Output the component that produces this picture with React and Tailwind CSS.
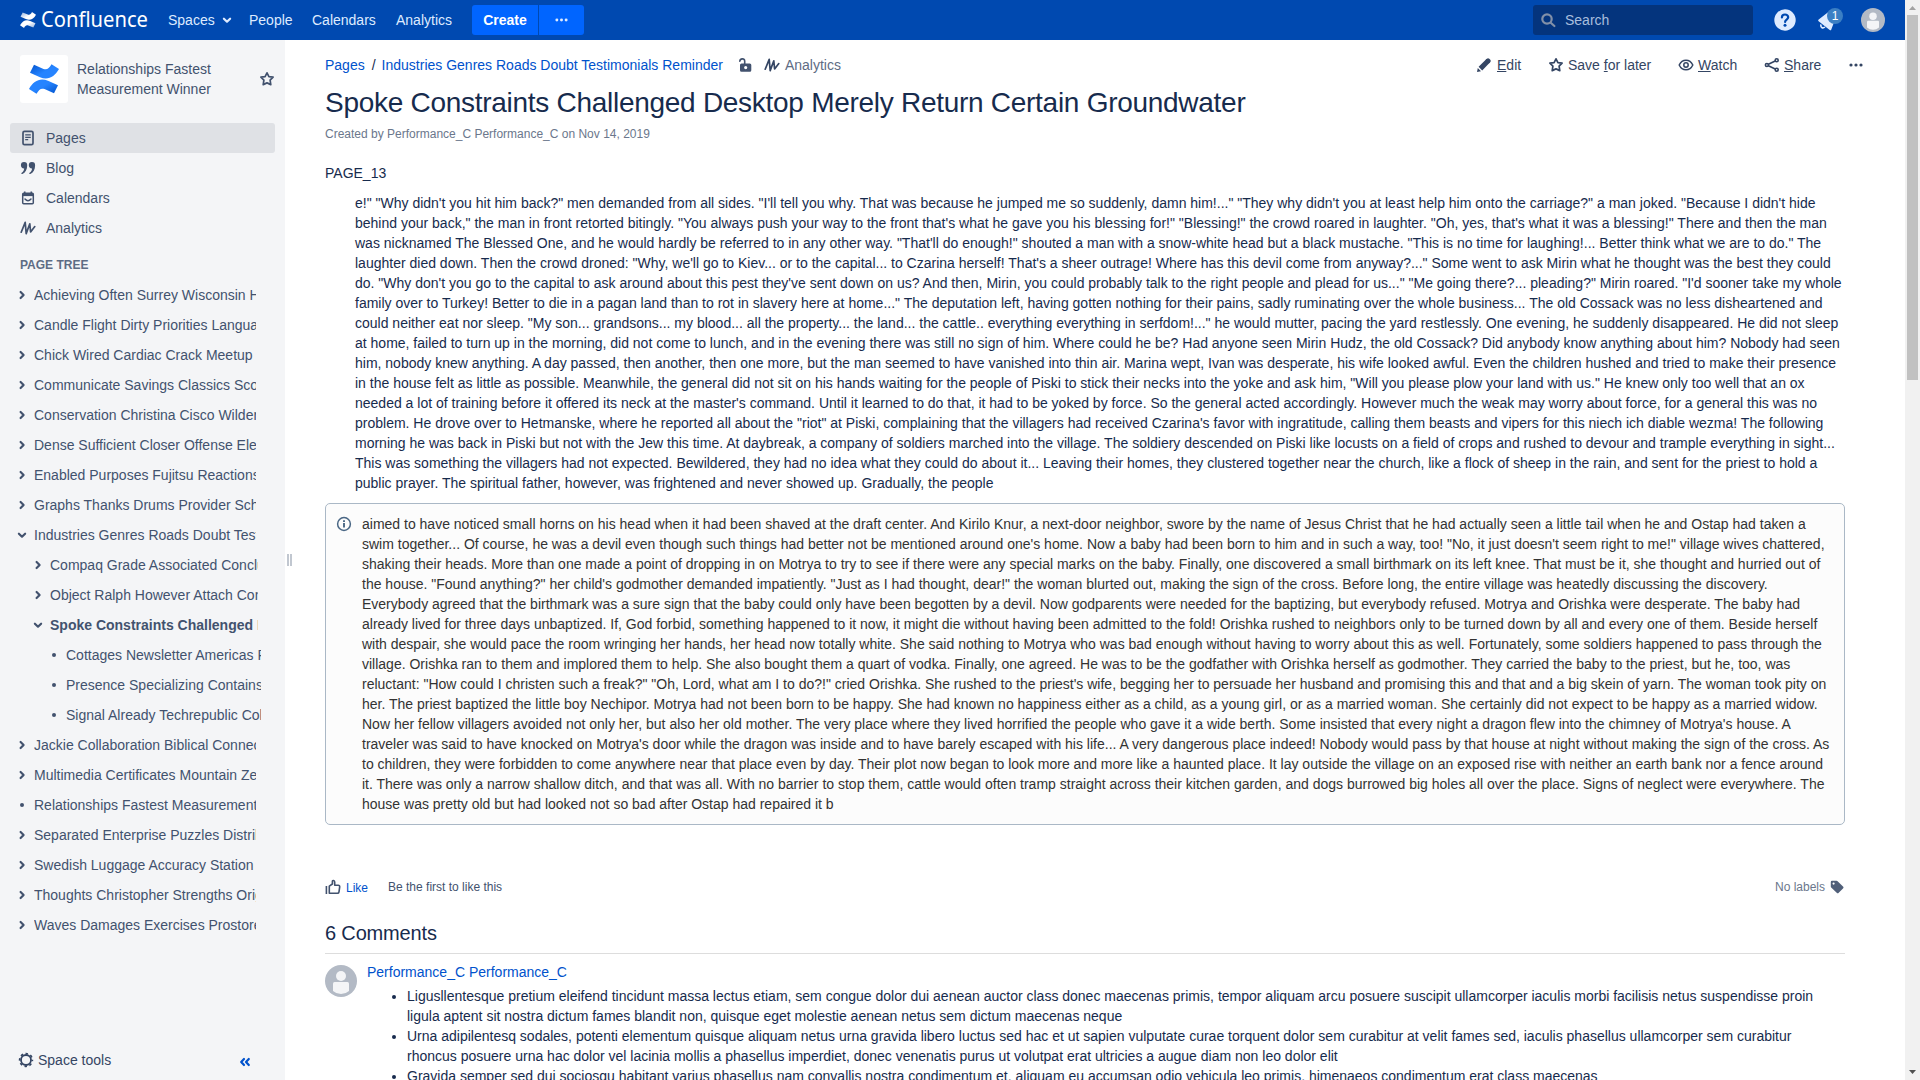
const Chevron = ({ down, className = "" }) => (
  <svg viewBox="0 0 10 10" className={`w-[10px] h-[10px] shrink-0 ${className}`} fill="none" stroke="currentColor" strokeWidth="2.2" strokeLinecap="round" strokeLinejoin="round">
    <path d={down ? "M1.9 3.7 5 6.700 8.100 3.700" : "M3.600 2 6.600 5 3.600 8"} />
  </svg>
);

const Star = ({ className = "" }) => (
  <svg viewBox="0 0 16 16" className={`w-4 h-4 shrink-0 ${className}`} fill="none" stroke="currentColor" strokeWidth="1.7" strokeLinejoin="round">
    <path d="M8 1.8l1.9 3.8 4.2.6-3 3 .7 4.4L8 11.9l-3.8 1.7.7-4.4-3-3 4.2-.6z" />
  </svg>
);

const Wave = ({ className = "" }) => (
  <svg viewBox="0 0 16 16" className={`w-4 h-4 shrink-0 ${className}`} fill="none" stroke="currentColor" strokeWidth="1.7" strokeLinecap="round" strokeLinejoin="round">
    <path d="M1.2 12.200 5.200 2.400 6.200 13.600 9.800 3.800 10.600 12 14.800 6.600" />
  </svg>
);

const Dots = ({ className = "" }) => (
  <svg viewBox="0 0 14 4" className={`w-[14px] h-1 shrink-0 ${className}`} fill="currentColor">
    <circle cx="2" cy="2" r="1.6" />
    <circle cx="7" cy="2" r="1.6" />
    <circle cx="12" cy="2" r="1.6" />
  </svg>
);

const Avatar = ({ className = "" }) => (
  <svg viewBox="0 0 32 32" className={`shrink-0 ${className}`}>
    <circle cx="16" cy="16" r="16" fill="#b3bac5" />
    <circle cx="16" cy="11" r="5" fill="#f4f5f7" />
    <path d="M8 18.5a1.5 1.5 0 0 1 1.5-1.5h13a1.5 1.5 0 0 1 1.5 1.5V26q-3.300 3-8 3t-8-3z" fill="#f4f5f7" />
  </svg>
);

const Logo = ({ id, edge, edgeOpacity = 1, fill, className = "" }) => (
  <svg viewBox="0 0 30 30" className={`shrink-0 ${className}`}>
    <defs>
      <linearGradient id={`${id}a`} x1="0" y1="0" x2="0.700" y2="0.600">
        <stop offset="0" stopColor={edge} stopOpacity={edgeOpacity} />
        <stop offset="0.800" stopColor={fill} />
      </linearGradient>
      <linearGradient id={`${id}b`} x1="1" y1="1" x2="0.300" y2="0.400">
        <stop offset="0" stopColor={edge} stopOpacity={edgeOpacity} />
        <stop offset="0.800" stopColor={fill} />
      </linearGradient>
    </defs>
    <path d="M5 .8 1 8.800 11 13.200C19 16.500 25.500 13 30 5L22.500.2C20 4.500 18 6.200 14.500 4.900z" fill={`url(#${id}a)`} />
    <path d="M25 29.200 29 21.200 19 16.800C11 13.500 4.500 17 0 25l7.500 4.800C10 25.500 12 23.800 15.500 25.100z" fill={`url(#${id}b)`} />
  </svg>
);

const PageIcon = () => (
  <svg viewBox="0 0 16 16" className="w-4 h-4" fill="none" stroke="currentColor" strokeWidth="1.7">
    <rect x="3" y="1.300" width="10" height="13.400" rx="1.500" />
    <path d="M5.200 4.800h5.600M5.200 7.300h5.600M5.200 9.700h3" strokeWidth="1.300" />
  </svg>
);
const QuoteIcon = () => (
  <svg viewBox="0 0 16 16" className="w-4 h-4" fill="currentColor">
    <path d="M4 2a3.200 3.200 0 0 1 3.200 3.400c0 4-1.700 7.300-4.800 8.600-.9.300-1.500-.7-.7-1.300 1.500-1.100 2.300-2.500 2.500-4.300A3.200 3.200 0 1 1 4 2z" />
    <path d="M11.900 2a3.200 3.200 0 0 1 3.200 3.400c0 4-1.700 7.300-4.800 8.600-.9.300-1.500-.7-.7-1.300 1.500-1.100 2.300-2.500 2.500-4.300A3.200 3.200 0 1 1 11.900 2z" />
  </svg>
);
const CalendarIcon = () => (
  <svg viewBox="0 0 16 16" className="w-4 h-4" fill="none" stroke="currentColor" strokeWidth="1.500">
    <rect x="2.700" y="3.200" width="10.600" height="10.600" rx="1" />
    <path d="M2.700 4.800h10.600" strokeWidth="2.600" />
    <path d="M4.700 1.500v2M11.300 1.500v2" strokeWidth="1.600" />
    <path d="M5 9q3 3.400 6 0" strokeLinecap="round" />
  </svg>
);

const NAV = [
  ["Pages", PageIcon, true],
  ["Blog", QuoteIcon],
  ["Calendars", CalendarIcon],
  ["Analytics", Wave],
];

const TREE = [
  ["Achieving Often Surrey Wisconsin Hills", 0, "right"],
  ["Candle Flight Dirty Priorities Language", 0, "right"],
  ["Chick Wired Cardiac Crack Meetup", 0, "right"],
  ["Communicate Savings Classics Scope", 0, "right"],
  ["Conservation Christina Cisco Wilderness", 0, "right"],
  ["Dense Sufficient Closer Offense Electric", 0, "right"],
  ["Enabled Purposes Fujitsu Reactions", 0, "right"],
  ["Graphs Thanks Drums Provider School", 0, "right"],
  ["Industries Genres Roads Doubt Testimonials Reminder", 0, "down"],
  ["Compaq Grade Associated Conclude", 1, "right"],
  ["Object Ralph However Attach Contact", 1, "right"],
  ["Spoke Constraints Challenged Desktop Merely Return Certain Groundwater", 1, "down", true],
  ["Cottages Newsletter Americas Prior", 2, "dot"],
  ["Presence Specializing Contains", 2, "dot"],
  ["Signal Already Techrepublic Collect", 2, "dot"],
  ["Jackie Collaboration Biblical Connect", 0, "right"],
  ["Multimedia Certificates Mountain Zealand", 0, "right"],
  ["Relationships Fastest Measurement Winner", 0, "dot"],
  ["Separated Enterprise Puzzles Distributed", 0, "right"],
  ["Swedish Luggage Accuracy Station", 0, "right"],
  ["Thoughts Christopher Strengths Origin", 0, "right"],
  ["Waves Damages Exercises Prostores", 0, "right"],
];
const INDENT = ["pl-[17px] w-[256px]", "pl-[33px] w-[258px]", "pl-[49px] w-[261px]"];

const QUOTE = `e!" "Why didn't you hit him back?" men demanded from all sides. "I'll tell you why. That was because he jumped me so suddenly, damn him!..." "They why didn't you at least help him onto the carriage?" a man joked. "Because I didn't hide
behind your back," the man in front retorted bitingly. "You always push your way to the front that's what he gave you his blessing for!" "Blessing!" the crowd roared in laughter. "Oh, yes, that's what it was a blessing!" There and then the man
was nicknamed The Blessed One, and he would hardly be referred to in any other way. "That'll do enough!" shouted a man with a snow-white head but a black mustache. "This is no time for laughing!... Better think what we are to do." The
laughter died down. Then the crowd droned: "Why, we'll go to Kiev... or to the capital... to Czarina herself! That's a sheer outrage! Where has this devil come from anyway?..." Some went to ask Mirin what he thought was the best they could
do. "Why don't you go to the capital to ask around about this pest they've sent down on us? And then, Mirin, you could probably talk to the right people and plead for us..." "Me going there?... pleading?" Mirin roared. "I'd sooner take my whole
family over to Turkey! Better to die in a pagan land than to rot in slavery here at home..." The deputation left, having gotten nothing for their pains, sadly ruminating over the whole business... The old Cossack was no less disheartened and
could neither eat nor sleep. "My son... grandsons... my blood... all the property... the land... the cattle.. everything everything in serfdom!..." he would mutter, pacing the yard restlessly. One evening, he suddenly disappeared. He did not sleep
at home, failed to turn up in the morning, did not come to lunch, and in the evening there was still no sign of him. Where could he be? Had anyone seen Mirin Hudz, the old Cossack? Did anybody know anything about him? Nobody had seen
him, nobody knew anything. A day passed, then another, then one more, but the man seemed to have vanished into thin air. Marina wept, Ivan was desperate, his wife looked awful. Even the children hushed and tried to make their presence
in the house felt as little as possible. Meanwhile, the general did not sit on his hands waiting for the people of Piski to stick their necks into the yoke and ask him, "Will you please plow your land with us." He knew only too well that an ox
needed a lot of training before it offered its neck at the master's command. Until it learned to do that, it had to be yoked by force. So the general acted accordingly. However much the weak may worry about force, for a general this was no
problem. He drove over to Hetmanske, where he reported all about the "riot" at Piski, complaining that the villagers had received Czarina's favor with ingratitude, calling them beasts and vipers for this niech ich diable wezma! The following
morning he was back in Piski but not with the Jew this time. At daybreak, a company of soldiers marched into the village. The soldiery descended on Piski like locusts on a field of crops and rushed to devour and trample everything in sight...
This was something the villagers had not expected. Bewildered, they had no idea what they could do about it... Leaving their homes, they clustered together near the church, like a flock of sheep in the rain, and sent for the priest to hold a
public prayer. The spiritual father, however, was frightened and never showed up. Gradually, the people`;

const INFO = `aimed to have noticed small horns on his head when it had been shaved at the draft center. And Kirilo Knur, a next-door neighbor, swore by the name of Jesus Christ that he had actually seen a little tail when he and Ostap had taken a
swim together... Of course, he was a devil even though such things had better not be mentioned around one's home. Now a baby had been born to him and in such a way, too! "No, it just doesn't seem right to me!" village wives chattered,
shaking their heads. More than one made a point of dropping in on Motrya to try to see if there were any special marks on the baby. Finally, one discovered a small birthmark on its left knee. That must be it, she thought and hurried out of
the house. "Found anything?" her child's godmother demanded impatiently. "Just as I had thought, dear!" the woman blurted out, making the sign of the cross. Before long, the entire village was heatedly discussing the discovery.
Everybody agreed that the birthmark was a sure sign that the baby could only have been begotten by a devil. Now godparents were needed for the baptizing, but everybody refused. Motrya and Orishka were desperate. The baby had
already lived for three days unbaptized. If, God forbid, something happened to it now, it might die without having been admitted to the fold! Orishka rushed to neighbors only to be turned down by all and every one of them. Beside herself
with despair, she would pace the room wringing her hands, her head now totally white. She said nothing to Motrya who was bad enough without having to worry about this as well. Fortunately, some soldiers happened to pass through the
village. Orishka ran to them and implored them to help. She also bought them a quart of vodka. Finally, one agreed. He was to be the godfather with Orishka herself as godmother. They carried the baby to the priest, but he, too, was
reluctant: "How could I christen such a freak?" "Oh, Lord, what am I to do?!" cried Orishka. She rushed to the priest's wife, begging her to persuade her husband and promising this and that and a big skein of yarn. The woman took pity on
her. The priest baptized the little boy Nechipor. Motrya had not been born to be happy. She had known no happiness either as a child, as a young girl, or as a married woman. She certainly did not expect to be happy as a married widow.
Now her fellow villagers avoided not only her, but also her old mother. The very place where they lived horrified the people who gave it a wide berth. Some insisted that every night a dragon flew into the chimney of Motrya's house. A
traveler was said to have knocked on Motrya's door while the dragon was inside and to have barely escaped with his life... A very dangerous place indeed! Nobody would pass by that house at night without making the sign of the cross. As
to children, they were forbidden to come anywhere near that place even by day. Their plot now began to look more and more like a haunted place. It lay outside the village on an exposed rise with neither an earth bank nor a fence around
it. There was only a narrow shallow ditch, and that was all. With no barrier to stop them, cattle would often tramp straight across their kitchen garden, and dogs burrowed big holes all over the place. Signs of neglect were everywhere. The
house was pretty old but had looked not so bad after Ostap had repaired it b`;

const COMMENTS = [
  `Ligusllentesque pretium eleifend tincidunt massa lectus etiam, sem congue dolor dui aenean auctor class donec maecenas primis, tempor aliquam arcu posuere suscipit ullamcorper iaculis morbi facilisis netus suspendisse proin
ligula aptent sit nostra dictum fames blandit non, quisque eget molestie aenean netus sem dictum maecenas neque`,
  `Urna adipilentesq sodales, potenti elementum quisque aliquam netus urna gravida libero luctus sed hac et ut sapien vulputate curae torquent dolor sem curabitur at velit fames sed, iaculis phasellus ullamcorper sem curabitur
rhoncus posuere urna hac dolor vel lacinia mollis a phasellus imperdiet, donec venenatis purus ut volutpat erat ultricies a augue diam non leo dolor elit`,
  `Gravida semper sed dui sociosqu habitant varius phasellus nam convallis nostra condimentum et, aliquam eu accumsan odio vehicula leo primis, himenaeos condimentum erat class maecenas`,
];

function Header() {
  return (
    <header className="flex h-10 shrink-0 items-center bg-[#0049b0] pl-5 pr-5 text-[#deebff]">
      <Logo id="header-logo" edge="#fff" edgeOpacity={0.55} fill="#fff" className="h-4 w-4" />
      <svg className="ml-[6px] h-8 w-[107px] shrink-0 overflow-visible" viewBox="0 0 107 32">
        <text x="-1" y="22.500" textLength="107" lengthAdjust="spacingAndGlyphs" fontSize="21" fill="#fff" fontFamily="'Noto Sans', 'Open Sans', sans-serif">Confluence</text>
      </svg>
      <nav className="ml-[19px] flex items-center">
        <span className="flex w-[81px] items-center">
          Spaces
          <Chevron down className="ml-[7px]" />
        </span>
        <span className="w-[63px]">People</span>
        <span className="w-[84px]">Calendars</span>
        <span className="w-[76px]">Analytics</span>
      </nav>
      <div className="flex h-[30px] gap-px">
        <div className="flex w-[66px] items-center justify-center rounded-l-[3px] bg-[#0065ff] font-bold text-white">Create</div>
        <div className="flex w-[45px] items-center justify-center rounded-r-[3px] bg-[#0065ff]">
          <Dots className="w-[13px]! mr-px" />
        </div>
      </div>
      <div className="ml-auto flex h-[30px] w-[220px] items-center rounded-[3px] bg-[#04347d] pl-2 text-[#a8bedd]">
        <svg viewBox="0 0 15 15" className="mr-[9px] h-[15px] w-[15px]" fill="none" stroke="#8290a8" strokeWidth="2.200" strokeLinecap="round">
          <circle cx="6" cy="6" r="4.700" />
          <path d="m9.700 9.700 3.700 3.300" />
        </svg>
        Search
      </div>
      <svg viewBox="0 0 22 22" className="ml-[21px] h-[22px] w-[22px]">
        <circle cx="11" cy="11" r="10.700" fill="#deebff" />
        <path d="M7.900 8.500C7.900 6.600 9.200 5.500 11 5.500s3.200 1.100 3.200 2.800c0 2.200-3.100 2.300-3.100 4.700" fill="none" stroke="#0049b0" strokeWidth="2.200" strokeLinecap="round" />
        <circle cx="11" cy="16.300" r="1.500" fill="#0049b0" />
      </svg>
      <div className="relative ml-[22px] h-6 w-6">
        <svg viewBox="0 0 24 24" className="h-6 w-6" fill="#deebff">
          <path d="M.6 13.200a1.100 1.100 0 0 1 .1-1.700L11 3.500l5.500 9.500-3.300 8.700a1 1 0 0 1-1.500.3z" />
          <path d="M3.200 16.500a2 2 0 1 0 3.600 2.400" fill="none" stroke="#deebff" strokeWidth="1.600" />
        </svg>
        <span className="absolute left-[9px] top-0 flex h-4 w-4 items-center justify-center rounded-full bg-[#3b7fc4] text-xs text-white">1</span>
      </div>
      <Avatar className="ml-[19px] h-6 w-6" />
    </header>
  );
}

function Sidebar() {
  return (
    <aside className="flex w-[285px] shrink-0 flex-col bg-[#f4f5f7] text-[#42526e]">
      <div className="mt-[15px] flex h-12 items-center pl-5">
        <div className="flex h-12 w-12 items-center justify-center rounded-[3px] bg-white">
          <Logo id="space-logo" edge="#0052cc" fill="#2684ff" className="h-[30px] w-[30px]" />
        </div>
        <div className="ml-[9px] leading-5">
          Relationships Fastest
          <br />
          Measurement Winner
        </div>
        <Star className="ml-auto mr-[10px]" />
      </div>
      <nav className="mx-[10px] mt-5">
        {NAV.map(([label, Icon, active]) => (
          <div key={label} className={`flex h-[30px] items-center rounded-[3px] pl-[10px] ${active ? "bg-[#dfe1e5]" : ""}`}>
            <Icon />
            <span className="ml-[10px]">{label}</span>
          </div>
        ))}
      </nav>
      <h2 className="mt-3 pl-5 text-xs font-bold leading-5 text-[#5e6c84]">PAGE TREE</h2>
      <div className="mt-[5px]">
        {TREE.map(([label, level, mark, bold]) => (
          <div key={label} className={`flex h-[30px] items-center overflow-hidden ${INDENT[level]}`}>
            {mark === "dot" ? (
              <span className="mx-[3px] h-1 w-1 shrink-0 rounded-full bg-[#42526e]" />
            ) : (
              <Chevron down={mark === "down"} />
            )}
            <span className={`ml-[7px] flex-1 overflow-hidden whitespace-nowrap ${bold ? "font-bold" : ""}`}>{label}</span>
          </div>
        ))}
      </div>
      <div className="mt-auto flex h-10 items-center pl-[18px] text-[#344563]">
        <svg viewBox="0 0 16 16" className="h-4 w-4" fill="none" stroke="currentColor">
          <circle cx="8" cy="8" r="5" strokeWidth="1.800" />
          <circle cx="8" cy="8" r="6.400" strokeWidth="1.600" strokeDasharray="2.500 2.526" strokeDashoffset="1.250" />
        </svg>
        <span className="ml-1">Space tools</span>
        <svg viewBox="0 0 12 10" className="ml-[128px] mt-1 h-[10px] w-3" fill="none" stroke="#0052cc" strokeWidth="2.200" strokeLinecap="round" strokeLinejoin="round">
          <path d="M5 2 2.200 5 5 8M9.800 2 7 5 9.800 8" />
        </svg>
      </div>
    </aside>
  );
}

function Toolbar() {
  return (
    <div className="flex items-center text-[#344563]">
      <svg viewBox="0 0 16 16" className="h-4 w-4" fill="currentColor">
        <path d="M1 15l.8-4 3.200 3.200zM2.600 9.800 10.500 2.100a3.100 3.100 0 0 1 3.400 3.400L6.200 13.400z" />
        <path d="M10.800 1.800a1.800 1.800 0 0 1 2.500-.1l1 1a1.800 1.800 0 0 1-.1 2.500l-1.400 1.400-3.400-3.400z" />
      </svg>
      <span className="ml-[5px] w-[51px]"><u>E</u>dit</span>
      <Star />
      <span className="ml-1 w-[110px]">Save <u>f</u>or later</span>
      <svg viewBox="0 0 16 16" className="h-4 w-4" fill="none" stroke="currentColor" strokeWidth="1.500">
        <path d="M1.200 8C2.600 5 5 3.200 8 3.200S13.400 5 14.800 8C13.400 11 11 12.800 8 12.800S2.600 11 1.200 8z" />
        <circle cx="8" cy="8" r="2.200" />
      </svg>
      <span className="ml-[4px] w-[66px]"><u>W</u>atch</span>
      <svg viewBox="0 0 16 16" className="h-4 w-4" fill="none" stroke="currentColor" strokeWidth="1.600">
        <circle cx="2.900" cy="8" r="1.500" />
        <circle cx="12.700" cy="3.300" r="1.500" />
        <circle cx="12.700" cy="12.700" r="1.500" />
        <path d="m4.400 7.300 6.800-3.300M4.400 8.700l6.800 3.300" />
      </svg>
      <span className="ml-1 w-[65px]"><u>S</u>hare</span>
      <Dots />
    </div>
  );
}

function Main() {
  return (
    <main className="flex min-w-0 flex-1 flex-col overflow-hidden pt-[15px] pr-[60px] text-[#172b4d]">
      <div className="-mr-[18px] flex h-5 items-center">
        <span className="text-[#0052cc]">Pages</span>
        <span className="ml-[7px]">/</span>
        <span className="ml-[6px] text-[#0052cc]">Industries Genres Roads Doubt Testimonials Reminder</span>
        <svg viewBox="0 0 16 16" className="ml-[14px] h-4 w-4 text-[#42526e]" fill="currentColor">
          <path fillRule="evenodd" d="M4.500 6.500h8.300a1.500 1.500 0 0 1 1.500 1.500v5.300a1.500 1.500 0 0 1-1.500 1.500H4.500A1.500 1.500 0 0 1 3 13.300V8a1.500 1.500 0 0 1 1.500-1.500zM8.700 9a1.600 1.600 0 1 0 0 3.200 1.600 1.600 0 0 0 0-3.200z" />
          <path d="M2.800 4.300C3 1.300 7.400.9 7.700 4v3" fill="none" stroke="currentColor" strokeWidth="1.600" strokeLinecap="round" />
        </svg>
        <Wave className="ml-[11px] text-[#344563]" />
        <span className="ml-[5px] text-[#5e6c84]">Analytics</span>
        <div className="ml-auto">
          <Toolbar />
        </div>
      </div>
      <h1 className="mt-[12px] whitespace-nowrap text-[28px] leading-8 tracking-[-0.01em]">
        Spoke Constraints Challenged Desktop Merely Return Certain Groundwater
      </h1>
      <div className="mt-[5px] text-xs leading-5 text-[#6b778c]">Created by Performance_C Performance_C on Nov 14, 2019</div>
      <p className="mt-[19px] leading-5">PAGE_13</p>
      <p className="mt-[10px] whitespace-pre pl-[30px] leading-5">{QUOTE}</p>
      <div className="mt-[10px] flex rounded-[5px] border border-[#aab8c6] bg-[#fcfcfc] py-[10px] text-[#333]">
        <svg viewBox="0 0 16 16" className="ml-[10px] mr-[10px] mt-[2px] h-4 w-4 shrink-0" fill="none" stroke="#4a6785">
          <circle cx="8" cy="8" r="6.400" strokeWidth="1.500" />
          <path d="M8 7v4.500M8 4.200v1.700" strokeWidth="1.900" />
        </svg>
        <p className="whitespace-pre leading-5">{INFO}</p>
      </div>
      <div className="mt-[53px] flex h-5 items-center text-xs">
        <svg viewBox="0 0 16 16" className="h-4 w-4" fill="none" stroke="#42526e" strokeWidth="1.600" strokeLinejoin="round">
          <path d="M1.400 7v8" />
          <path d="M4.300 14.300V7.200L7.400 5V2.300C7.400 1.200 9.600 1 9.700 3v3.300h3.600c1 0 1.500.7 1.400 1.500l-.7 5c-.1.900-.8 1.500-1.600 1.500z" />
        </svg>
        <span className="ml-[5px] mt-[2px] text-[#0052cc]">Like</span>
        <span className="ml-5 text-[#42526e]">Be the first to like this</span>
        <span className="ml-auto text-[#6b778c]">No labels</span>
        <svg viewBox="0 0 14 14" className="ml-[5px] mr-[1px] h-[14px] w-[14px]" fill="#505f79">
          <path fillRule="evenodd" d="M2 .8h4.600a1.500 1.500 0 0 1 1 .4l5.400 5.300a1.400 1.400 0 0 1 0 2l-4.300 4.300a1.400 1.400 0 0 1-2 0L1.200 7.500a1.500 1.500 0 0 1-.4-1V2A1.200 1.200 0 0 1 2 .8zm1.600 1.700a1.100 1.100 0 1 0 0 2.200 1.100 1.100 0 0 0 0-2.200z" />
        </svg>
      </div>
      <h2 className="mt-[25px] border-b border-[#dddddd] pb-[8px] text-xl leading-6 tracking-[-0.008em]">6 Comments</h2>
      <div className="mt-[8px] flex">
        <Avatar className="mt-[3px] h-8 w-8" />
        <div className="ml-[10px]">
          <div className="leading-5 text-[#0052cc]">Performance_C Performance_C</div>
          <ul className="mt-[4px] list-disc pl-10 leading-5">
            {COMMENTS.map((c) => (
              <li key={c} className="whitespace-pre">{c}</li>
            ))}
          </ul>
        </div>
      </div>
    </main>
  );
}

export default function App() {
  return (
    <div className="flex h-[1080px] w-[1920px] overflow-hidden bg-white text-sm font-['Liberation_Sans',Arial,sans-serif]">
      <div className="flex min-w-0 flex-1 flex-col">
        <Header />
        <div className="flex min-h-0 flex-1">
          <Sidebar />
          <div className="flex w-10 shrink-0 items-center gap-px pl-[2px]">
            <span className="h-3 w-[2px] bg-[#c1c7d0]" />
            <span className="h-3 w-[2px] bg-[#c1c7d0]" />
          </div>
          <Main />
        </div>
      </div>
      <div className="flex w-[15px] shrink-0 flex-col items-center bg-[#f1f1f1]">
        <svg viewBox="0 0 15 15" className="h-[15px] w-[15px]" fill="#a3a3a3">
          <path d="M4 10h7L7.500 6z" />
        </svg>
        <div className="h-[365px] w-[11px] bg-[#c1c1c1]" />
        <svg viewBox="0 0 15 15" className="mt-auto h-[15px] w-[15px]" fill="#505050">
          <path d="M4 5h7L7.500 9z" />
        </svg>
      </div>
    </div>
  );
}
